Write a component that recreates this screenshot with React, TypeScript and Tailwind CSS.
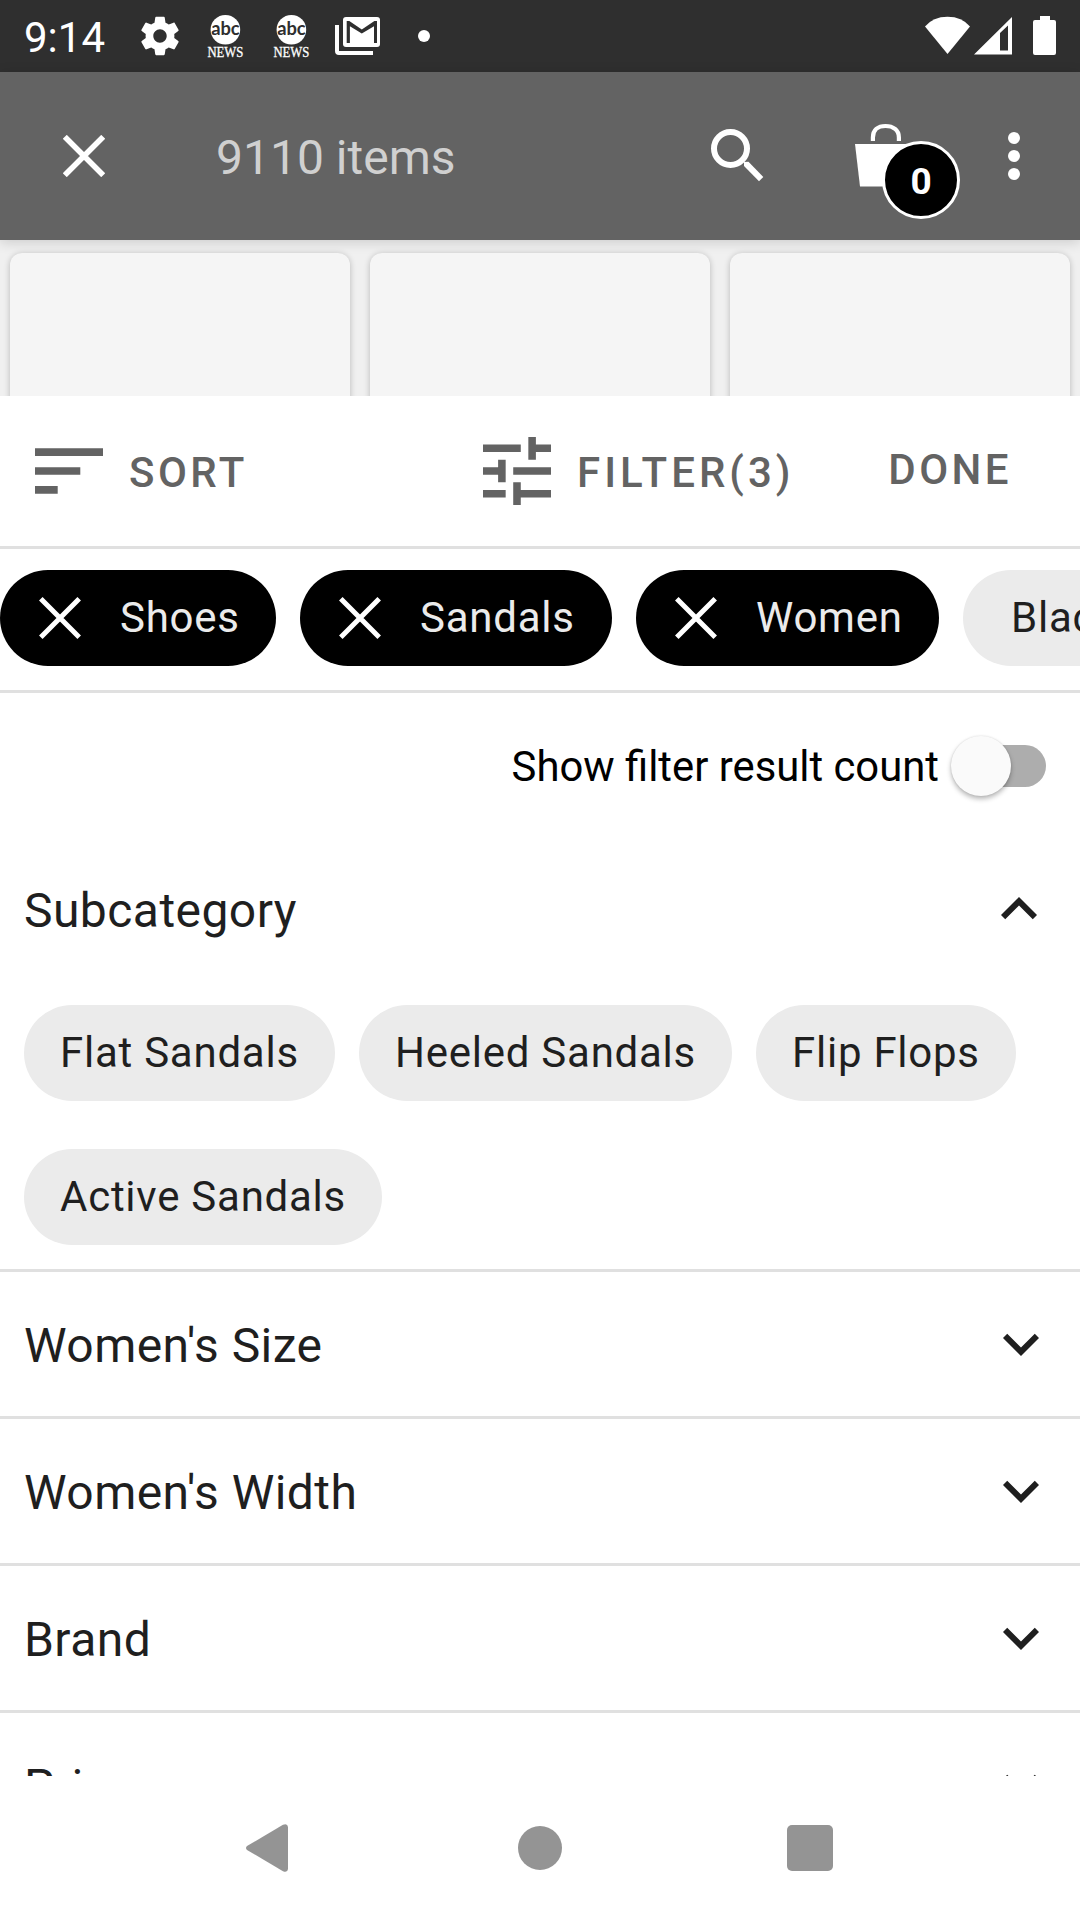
import type { ReactNode } from 'react';

function Close({ stroke }: { stroke: number }) {
  return (
    <svg className="h-[42px] w-[42px] shrink-0" viewBox="0 0 42 42" fill="none" stroke="#fff" strokeWidth={stroke}>
      <path d="M1.8 1.8 40.2 40.2M40.2 1.8 1.8 40.2" />
    </svg>
  );
}

function NewsIcon() {
  return (
    <svg className="h-[56px] w-[40px] shrink-0" viewBox="0 -4 40 56">
      <circle cx="20.4" cy="17.8" r="14.8" fill="#fff" />
      <text x="20.4" y="23.4" textAnchor="middle" fontFamily="Lato, sans-serif" fontWeight="700" fontSize="18.5" textLength="28.500" lengthAdjust="spacingAndGlyphs" fill="#2f2f2f">abc</text>
      <text x="20.4" y="44.5" textAnchor="middle" fontFamily="Liberation Serif, serif" fontSize="14.5" textLength="36" lengthAdjust="spacingAndGlyphs" fill="#fff" stroke="#fff" strokeWidth="0.3">NEWS</text>
    </svg>
  );
}

function StatusBar() {
  return (
    <header className="flex h-[72px] shrink-0 items-center bg-[#2f2f2f] pl-6 pr-6 text-white">
      <span className="w-[81px] pt-[4px] text-[42px] leading-[50px]">9:14</span>
      <svg className="ml-8 h-[46px] w-[46px] shrink-0" viewBox="0 0 24 24" fill="#fff">
        <path d="M19.43 12.98c.04-.32.07-.64.07-.98s-.03-.66-.07-.98l2.11-1.65c.19-.15.24-.42.12-.64l-2-3.46c-.12-.22-.39-.3-.61-.22l-2.49 1c-.52-.4-1.08-.73-1.69-.98l-.38-2.65C14.46 2.18 14.25 2 14 2h-4c-.25 0-.46.18-.49.42l-.38 2.65c-.61.25-1.17.59-1.69.98l-2.49-1c-.23-.09-.49 0-.61.22l-2 3.46c-.13.22-.07.49.12.64l2.11 1.65c-.04.32-.07.65-.07.98s.03.66.07.98l-2.11 1.65c-.19.15-.24.42-.12.64l2 3.46c.12.22.39.3.61.22l2.49-1c.52.4 1.08.73 1.69.98l.38 2.65c.03.24.24.42.49.42h4c.25 0 .46-.18.49-.42l.38-2.65c.61-.25 1.17-.59 1.69-.98l2.49 1c.23.09.49 0 .61-.22l2-3.46c.12-.22.07-.49-.12-.64l-2.11-1.65zM12 15.5c-1.93 0-3.5-1.57-3.5-3.5s1.57-3.5 3.5-3.5 3.5 1.57 3.5 3.5-1.57 3.5-3.5 3.5z" />
      </svg>
      <div className="ml-[22px] flex gap-[26px]">
        <NewsIcon />
        <NewsIcon />
      </div>
      <svg className="ml-[24px] h-[38px] w-[45px] shrink-0" viewBox="0 0 45 38">
        <path d="M0 8h4v26h34v4H4a4 4 0 0 1-4-4z" fill="#fff" />
        <rect x="8" y="0" width="37" height="30" rx="3" fill="#fff" />
        <path d="M11.7 4h2.6L26.8 12.6 39.4 4H42v22h-3V9.3L26.8 16.6 14.9 9.3V26h-3.2z" fill="#2f2f2f" />
      </svg>
      <span className="ml-[38px] h-3 w-3 rounded-full bg-white" />
      <svg className="ml-auto h-[40px] w-[132px] shrink-0" viewBox="924 16 132 40" fill="#fff">
        <path d="M925 26.5Q933 16.7 947.5 16.7T970 26.5L947.5 54z" />
        <path fillRule="evenodd" d="M974 54.6 1012 17v37.6zM1000 33v17.5h8V25.5z" />
        <path d="M1040 16h10v4h4a2 2 0 0 1 2 2v31a2 2 0 0 1-2 2h-19a2 2 0 0 1-2-2V22a2 2 0 0 1 2-2h5z" />
      </svg>
    </header>
  );
}

function AppBar() {
  return (
    <div className="z-10 flex h-[168px] shrink-0 items-center bg-[#636363] pl-[63px] shadow-[0_2px_12px_rgba(0,0,0,0.16)]">
      <Close stroke={5.6} />
      <h1 className="ml-[111px] pt-[3px] text-[48px] leading-[56px] text-[#d0d0d0]">9110 items</h1>
      <svg className="ml-auto h-[56px] w-[56px] shrink-0" viewBox="709 128 56 56" fill="none" stroke="#fff">
        <circle cx="730.5" cy="148.5" r="16.5" strokeWidth="6" />
        <path d="M744 162l4.5-.3L763.3 177 759 181.3 744 166z" fill="#fff" stroke="none" />
      </svg>
      <div className="relative ml-[90px] h-[96px] w-[105px] shrink-0">
        <svg className="h-[96px] w-[105px]" viewBox="855 108 105 96" fill="#fff">
          <path d="M855 144h60l-5 42.5h-50z" />
          <path d="M872.9 141v-3.5c0-7.500 5-11.500 12.600-11.500s13.400 4 13.400 11.500v3.500" fill="none" stroke="#fff" strokeWidth="4.200" />
        </svg>
        <span className="absolute left-[27px] top-[33px] flex h-[78px] w-[78px] items-center justify-center rounded-full border-3 border-white bg-black pt-[3px] text-[37px] font-bold leading-none text-white">0</span>
      </div>
      <div className="ml-12 mr-[60px] flex flex-col gap-[6px]">
        <span className="h-3 w-3 rounded-full bg-white" />
        <span className="h-3 w-3 rounded-full bg-white" />
        <span className="h-3 w-3 rounded-full bg-white" />
      </div>
    </div>
  );
}

function ResultsBehind() {
  return (
    <div className="grid h-[156px] shrink-0 grid-cols-3 gap-5 overflow-hidden bg-[#f0f0f0] px-[10px] pt-[13px]">
      {[0, 1, 2].map((n) => (
        <div key={n} className="z-20 h-[300px] rounded-xl bg-[#f5f5f5] shadow-[0_1px_6px_rgba(0,0,0,0.24)]" />
      ))}
    </div>
  );
}

function Toolbar() {
  return (
    <div className="flex h-[153px] shrink-0 items-center border-b-3 border-[#e0e0e0] pl-[35px] text-[42px] font-medium leading-[50px] tracking-[3.45px] text-[#636363]">
      <svg className="h-[46px] w-[68px] shrink-0" viewBox="0 0 68 46" fill="#636363">
        <path d="M0 .3h68v7.600H0zM0 19.200h45.300v7.600H0zM0 38.100h22.700v7.600H0z" />
      </svg>
      <span className="ml-[26px] w-[120px] pt-[4px]">SORT</span>
      <svg className="ml-[234px] h-[68px] w-[68px] shrink-0" viewBox="3 3 18 18" fill="#636363">
        <path d="M3 17v2h6v-2H3zM3 5v2h10V5H3zm10 16v-2h8v-2h-8v-2h-2v6h2zM7 9v2H3v2h4v2h2V9H7zm14 4v-2H11v2h10zm-6-4h2V7h4V5h-4V3h-2v6z" />
      </svg>
      <span className="ml-[26px] pt-[4px] tracking-[4px]">FILTER(3)</span>
      <span className="ml-auto mr-[68px] pb-[2px]">DONE</span>
    </div>
  );
}

function Chip({ className, children }: { className: string; children: ReactNode }) {
  return (
    <div className={'flex h-24 shrink-0 items-center whitespace-nowrap rounded-full text-[42px] leading-[50px] tracking-[0.75px] ' + className}>
      {children}
    </div>
  );
}

function SelectedChip({ label, className }: { label: string; className: string }) {
  return (
    <Chip className={'bg-black pl-[39px] text-[#ebebeb] ' + className}>
      <Close stroke={5} />
      <span className="ml-[39px]">{label}</span>
    </Chip>
  );
}

function Section({ title, open }: { title: string; open?: boolean }) {
  return (
    <div className={open ? 'flex h-36 shrink-0 items-center justify-between pl-6 pr-[25px]' : 'flex h-[147px] shrink-0 items-center justify-between border-t-3 border-[#e0e0e0] pl-6 pr-[23px]'}>
      <h2 className="pt-[4px] text-[48px] leading-[56px] tracking-[0.45px] text-[#1f1f1f]">{title}</h2>
      <svg className="h-[72px] w-[72px]" viewBox="0 0 24 24" fill="#1f1f1f">
        <path d={open ? 'M12 8l-6 6 1.410 1.410L12 10.830l4.590 4.580L18 14z' : 'M16.590 8.590 12 13.170 7.410 8.590 6 10l6 6 6-6z'} />
      </svg>
    </div>
  );
}

export default function App() {
  return (
    <div className="flex h-[1920px] w-[1080px] flex-col overflow-hidden bg-white font-[Roboto,sans-serif]">
      <StatusBar />
      <AppBar />
      <ResultsBehind />
      <Toolbar />
      <div className="flex h-36 shrink-0 gap-6 overflow-hidden border-b-3 border-[#e0e0e0] pt-[21px]">
        <SelectedChip label="Shoes" className="w-[276px]" />
        <SelectedChip label="Sandals" className="w-[312px]" />
        <SelectedChip label="Women" className="w-[303px]" />
        <Chip className="bg-[#ebebeb] px-12 text-[#1f1f1f]">Black</Chip>
      </div>
      <main className="flex h-[1083px] shrink-0 flex-col overflow-hidden">
        <div className="flex h-36 shrink-0 items-center justify-end pr-[34px] pt-[2px] text-[41.8px] leading-[50px] text-black">
          <span className="pt-[2px]">Show filter result count</span>
          <div className="relative ml-[25px] h-[42px] w-[82px] rounded-full bg-[#adadad]">
            <span className="absolute left-[-13px] top-[-9px] h-[60px] w-[60px] rounded-full bg-[#fafafa] shadow-[0_3px_5px_rgba(0,0,0,0.28),0_0_2px_rgba(0,0,0,0.12)]" />
          </div>
        </div>
        <Section title="Subcategory" open />
        <div className="flex shrink-0 flex-wrap gap-x-6 gap-y-12 px-6 py-6 text-[#1f1f1f]">
          <Chip className="w-[311px] bg-[#ebebeb] pl-9">Flat Sandals</Chip>
          <Chip className="w-[373px] bg-[#ebebeb] pl-9">Heeled Sandals</Chip>
          <Chip className="w-[260px] bg-[#ebebeb] pl-9">Flip Flops</Chip>
          <Chip className="w-[358px] bg-[#ebebeb] pl-9">Active Sandals</Chip>
        </div>
        <Section title="Women's Size" />
        <Section title="Women's Width" />
        <Section title="Brand" />
        <Section title="Price" />
      </main>
      <nav className="flex h-36 shrink-0 items-center bg-white">
        <svg className="ml-[246px] h-[50px] w-[42px]" viewBox="0 -1 42 50" fill="#949494">
          <path d="M1 22 37 .8Q41.500-1 42 3v42q-.5 4-5 2.200L1 26q-2-2 0-4z" />
        </svg>
        <span className="ml-[230px] h-11 w-11 rounded-full bg-[#949494]" />
        <span className="ml-[225px] h-[46px] w-[46px] rounded-[5px] bg-[#949494]" />
      </nav>
    </div>
  );
}
